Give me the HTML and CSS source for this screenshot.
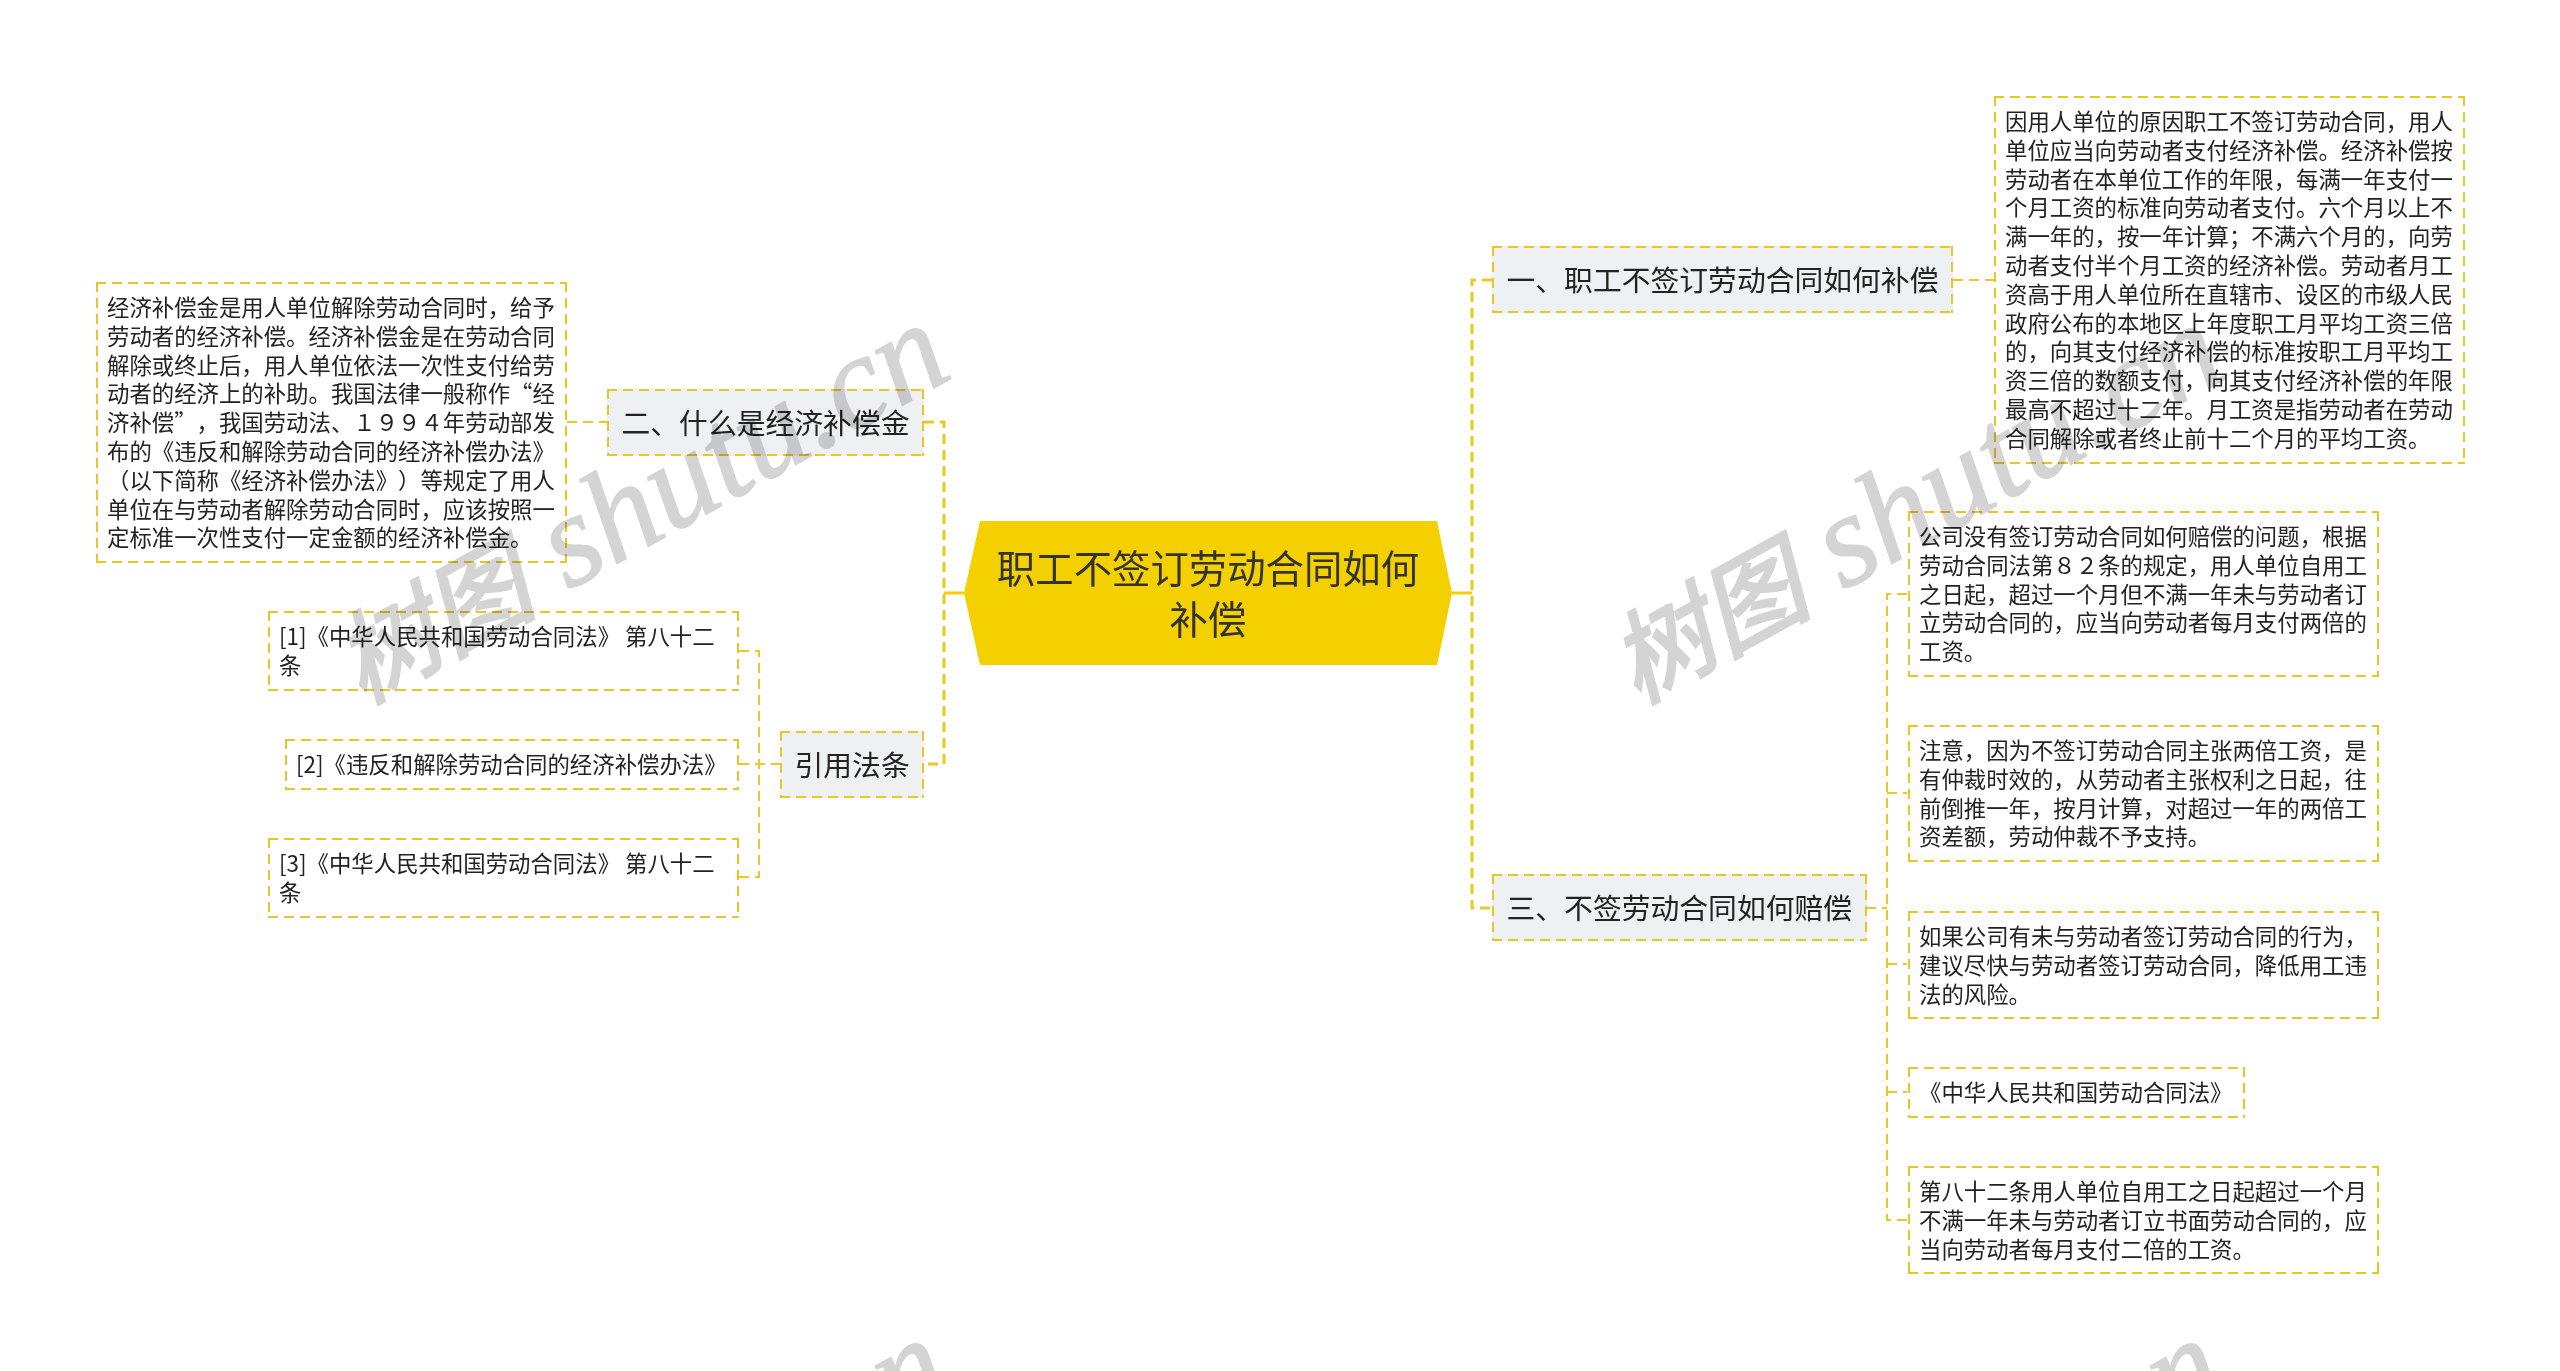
FILE: index.html
```html
<!DOCTYPE html>
<html lang="zh-CN">
<head>
<meta charset="utf-8">
<title>职工不签订劳动合同如何补偿</title>
<link rel="stylesheet" href="styles.css">
</head>
<body>
<main class="map">
  <svg class="links" width="2560" height="1371" viewBox="0 0 2560 1371" aria-hidden="true">
    <path class="solid" d="M964 593H944M1452 593H1472"/>
    <path class="main" d="M924 422H944V764H924"/>
    <path class="main" d="M1492 280H1472V908H1492"/>
    <path class="sub" d="M567 422H607"/>
    <path class="sub" d="M739 651H759V877H739"/>
    <path class="sub" d="M739 764H780"/>
    <path class="sub" d="M1953 280H1994"/>
    <path class="sub" d="M1866 908H1887"/>
    <path class="sub" d="M1907 594H1887V1220H1907"/>
    <path class="sub" d="M1887 793H1907M1887 964H1907M1887 1092H1907"/>
  </svg>

  <h1 class="node root n-root">职工不签订劳动合同如何补偿</h1>

  <div class="node topic n-t1">一、职工不签订劳动合同如何补偿</div>
  <div class="node topic n-t2">二、什么是经济补偿金</div>
  <div class="node topic n-t3">三、不签劳动合同如何赔偿</div>
  <div class="node topic n-t4">引用法条</div>

  <div class="node leaf wide n-a1">因用人单位的原因职工不签订劳动合同，用人单位应当向劳动者支付经济补偿。经济补偿按劳动者在本单位工作的年限，每满一年支付一个月工资的标准向劳动者支付。六个月以上不满一年的，按一年计算；不满六个月的，向劳动者支付半个月工资的经济补偿。劳动者月工资高于用人单位所在直辖市、设区的市级人民政府公布的本地区上年度职工月平均工资三倍的，向其支付经济补偿的标准按职工月平均工资三倍的数额支付，向其支付经济补偿的年限最高不超过十二年。月工资是指劳动者在劳动合同解除或者终止前十二个月的平均工资。</div>
  <div class="node leaf wide n-b1">经济补偿金是用人单位解除劳动合同时，给予劳动者的经济补偿。经济补偿金是在劳动合同解除或终止后，用人单位依法一次性支付给劳动者的经济上的补助。我国法律一般称作“经济补偿”，我国劳动法、１９９４年劳动部发布的《违反和解除劳动合同的经济补偿办法》（以下简称《经济补偿办法》）等规定了用人单位在与劳动者解除劳动合同时，应该按照一定标准一次性支付一定金额的经济补偿金。</div>
  <div class="node leaf wide n-c1">公司没有签订劳动合同如何赔偿的问题，根据劳动合同法第８２条的规定，用人单位自用工之日起，超过一个月但不满一年未与劳动者订立劳动合同的，应当向劳动者每月支付两倍的工资。</div>
  <div class="node leaf wide n-c2">注意，因为不签订劳动合同主张两倍工资，是有仲裁时效的，从劳动者主张权利之日起，往前倒推一年，按月计算，对超过一年的两倍工资差额，劳动仲裁不予支持。</div>
  <div class="node leaf wide n-c3">如果公司有未与劳动者签订劳动合同的行为，建议尽快与劳动者签订劳动合同，降低用工违法的风险。</div>
  <div class="node leaf n-c4">《中华人民共和国劳动合同法》</div>
  <div class="node leaf wide n-c5">第八十二条用人单位自用工之日起超过一个月不满一年未与劳动者订立书面劳动合同的，应当向劳动者每月支付二倍的工资。</div>
  <div class="node leaf wide n-d1">[1]《中华人民共和国劳动合同法》 第八十二条</div>
  <div class="node leaf n-d2">[2]《违反和解除劳动合同的经济补偿办法》</div>
  <div class="node leaf wide n-d3">[3]《中华人民共和国劳动合同法》 第八十二条</div>

  <span class="mark m1"><span class="mark-cjk">树图</span> shutu.cn</span>
  <span class="mark m2"><span class="mark-cjk">树图</span> shutu.cn</span>
  <span class="mark m3"><span class="mark-cjk">树图</span> shutu.cn</span>
  <span class="mark m4"><span class="mark-cjk">树图</span> shutu.cn</span>
</main>
</body>
</html>
```

FILE: styles.css
```css
html, body { margin: 0; padding: 0; background: #fff; }
body { font-family: "Noto Sans CJK SC", "Noto Sans", sans-serif; color: #222; text-spacing-trim: space-all; }

.map { position: relative; width: 2560px; height: 1371px; overflow: hidden; background: #fff; }

.links { position: absolute; left: 0; top: 0; }
.links path { fill: none; stroke: #eec727; }
.links .solid { stroke: #f5d000; stroke-width: 3; }
.links .main { stroke-width: 3; stroke-dasharray: 10 6; }
.links .sub { stroke-width: 2; stroke-dasharray: 10 6; }

.node {
  --dash: #ecc524;
  position: absolute;
  box-sizing: border-box;
  margin: 0;
  background-image:
    repeating-linear-gradient(to right, var(--dash) 0 10px, transparent 10px 16px),
    repeating-linear-gradient(to right, var(--dash) 0 10px, transparent 10px 16px),
    repeating-linear-gradient(to bottom, var(--dash) 0 10px, transparent 10px 16px),
    repeating-linear-gradient(to bottom, var(--dash) 0 10px, transparent 10px 16px);
  background-size: 100% 2px, 100% 2px, 2px 100%, 2px 100%;
  background-position: 0 0, 0 100%, 0 0, 100% 0;
  background-repeat: no-repeat;
}

.root {
  left: 964px; top: 521px; width: 488px; height: 144px;
  padding: 0 30px 2px;
  display: flex; align-items: center; justify-content: center; text-align: center;
  font-size: 38.4px; line-height: 51px; font-weight: 400; color: #333;
  background: #f5d000;
  clip-path: polygon(16px 0, 473px 0, 100% 50%, 473px 100%, 16px 100%, 0 50%);
}

.topic {
  background-color: #eef1f4;
  padding: 14.5px 14.5px 16.5px;
  font-size: 28.8px; line-height: 36px; white-space: nowrap;
}

.leaf { padding: 10px 11px 12px; font-size: 22.4px; line-height: 28.8px; }
.wide { width: 471px; }
.leaf:not(.wide) { white-space: nowrap; padding-right: 12.5px; }

/* nodes on the diagram canvas */
.n-t1 { left: 1492px; top: 246px; }
.n-t2 { left: 607px; top: 389px; }
.n-t3 { left: 1492px; top: 874px; }
.n-t4 { left: 780px; top: 731px; }
.n-a1 { left: 1994px; top: 96px; }
.n-b1 { left: 96px; top: 282px; }
.n-c1 { left: 1908px; top: 511px; }
.n-c2 { left: 1908px; top: 725px; }
.n-c3 { left: 1908px; top: 911px; }
.n-c4 { left: 1908px; top: 1067px; }
.n-c5 { left: 1908px; top: 1166px; }
.n-d1 { left: 268px; top: 611px; }
.n-d2 { left: 285px; top: 739px; }
.n-d3 { left: 268px; top: 838px; }

/* repeated watermark, blended over the map */
.mark {
  position: absolute;
  font-family: "Liberation Serif", "Noto Sans CJK SC", serif;
  font-style: italic;
  font-size: 132px; line-height: 1;
  color: #d4d4d4;
  -webkit-text-stroke: 1.5px #d4d4d4;
  white-space: nowrap;
  transform: rotate(-29deg);
  transform-origin: 0 100%;
  mix-blend-mode: multiply;
  pointer-events: none;
}
.mark-cjk { font-size: 101px; font-weight: 500; }
.m1 { left: 373px; top: 592px; }
.m2 { left: 1648px; top: 592px; }
.m3 { left: 373px; top: 1607px; }
.m4 { left: 1648px; top: 1607px; }
```
